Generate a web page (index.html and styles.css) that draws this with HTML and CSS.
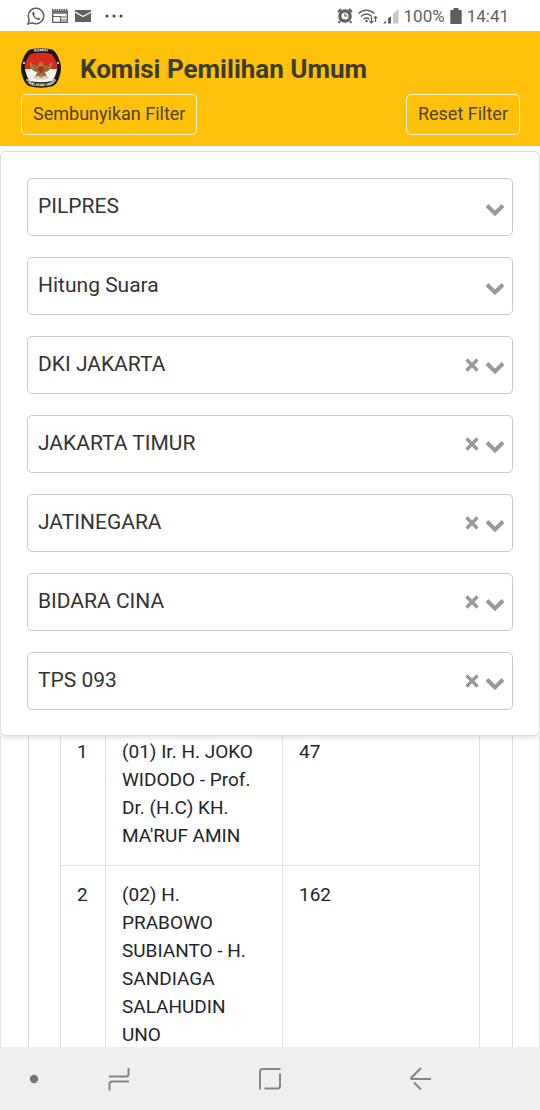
FILE: index.html
```html
<!DOCTYPE html>
<html lang="id">
<head>
<meta charset="utf-8">
<meta name="viewport" content="width=device-width, initial-scale=1">
<title>Komisi Pemilihan Umum</title>
<link rel="stylesheet" href="styles.css">
</head>
<body>
<svg width="0" height="0" class="sprite" aria-hidden="true">
  <symbol id="chevron" viewBox="0 0 20 14"><path d="M2 2.500l8 8 8-8" fill="none" stroke="currentColor" stroke-width="4"/></symbol>
  <symbol id="cross" viewBox="0 0 14 14"><path d="M1.500 1.500l11 11M12.500 1.500l-11 11" fill="none" stroke="currentColor" stroke-width="3.400"/></symbol>
</svg>

<div class="status">
  <div class="status-left">
    <svg width="18" height="18" viewBox="0 0 18 18" fill="none" stroke="#5f5f5f"><path d="M1 17l1.200-4.500A7.700 7.700 0 1 1 5.500 15.800z" stroke-width="1.500"/><path d="M6.300 4.500c-2 1.200-.8 4.200 1.200 6.200s4.800 3.300 6.100 1.300l-2.200-1.500-1.100 1c-1.600-.7-2.700-1.900-3.200-3.200l.9-1z" fill="#5f5f5f" stroke="none"/></svg>
    <svg width="16" height="14" viewBox="0 0 16 14" fill="none" stroke="#5f5f5f"><path d="M.7 2.500h14.600v10.800H.7z" stroke-width="1.300"/><path d="M0 1h16" stroke-width="2" stroke-dasharray="1.500 .8"/><path d="M0 4h16" stroke-width="1.500"/><path d="M1 7.500h8M8.500 7v6" stroke-width="1.200"/><path d="M9 7h6v2H9zM9 10h6v3H9z" fill="#aaa" stroke="none"/></svg>
    <svg width="16" height="12" viewBox="0 0 16 12"><path d="M0 0h16v12H0z" fill="#5f5f5f"/><path d="M0 2l8 4.500L16 2" fill="none" stroke="#fff" stroke-width="1.300"/></svg>
    <svg class="dots" width="18" height="4" viewBox="0 0 18 4" fill="#444"><circle cx="2" cy="2" r="1.500"/><circle cx="9" cy="2" r="1.500"/><circle cx="16" cy="2" r="1.500"/></svg>
  </div>
  <div class="status-right">
    <svg width="16" height="16" viewBox="0 0 16 16"><circle cx="8" cy="8" r="6.800" fill="#5f5f5f"/><path d="M1 4l3-3M12 1l3 3M3 13l-1.500 2M13 13l1.500 2" stroke="#5f5f5f" stroke-width="2"/><circle cx="8" cy="8" r="3.600" fill="#fff"/><path d="M8 5.500V8h2.500" fill="none" stroke="#5f5f5f" stroke-width="1.200"/></svg>
    <svg width="20" height="16" viewBox="0 0 20 16" fill="none" stroke="#5f5f5f" stroke-width="1.500"><path d="M.5 5.500C5 1 12 1 16.500 5.500M3 8.500c3.500-3.200 7.500-3.200 11 0M5.500 11.300c2-1.700 4-1.700 6 0"/><circle cx="8.500" cy="13" r="1.300" fill="#5f5f5f" stroke="none"/><path d="M13.500 9v6M11.500 13l2 2 2-2M17.500 14V8.500M16 10l1.500-1.500L19 10" stroke-width="1.200"/></svg>
    <svg width="16" height="16" viewBox="0 0 16 16"><path d="M0 15.500h3v-3zM5 15.500h3V8L5 10.500z" fill="#5f5f5f"/><path d="M10 15.500h5.500V1L10 6z" fill="#c6c6c6"/></svg>
    <span class="battery-level">100%</span>
    <svg width="12" height="16" viewBox="0 0 12 16"><path d="M3.500 0h5v2H11q.7 0 .7.700V15.300q0 .7-.7.700H1q-.7 0-.7-.7V2.700Q.3 2 1 2h2.500z" fill="#5f5f5f"/></svg>
    <span>14:41</span>
  </div>
</div>

<header class="header">
  <div class="brand">
    <svg class="logo" viewBox="0 0 40 40" role="img" aria-label="KPU">
      <defs>
        <path id="arc-top" d="M8 4.700Q20 1.700 32 4.700"/>
        <path id="arc-bottom" d="M2 25Q5 36 12 37.500Q20 39 28 37.500Q35 36 38 25"/>
      </defs>
      <path d="M9 1.500Q20-1.500 31 1.500Q35 3.500 38 11Q42 20 38 30Q36 36 32 38Q20 41.500 8 38Q4 36 2 30Q-2 20 2 11Q5 3.500 9 1.500z" fill="#171714"/>
      <path d="M9 6Q20 3.500 31 6L35 13Q37 18 36 22H4Q3 18 5 13z" fill="#d9281c"/>
      <path d="M4 21h32Q35 28 31 33Q20 35.500 9 33Q5 28 4 21z" fill="#f7f3ee"/>
      <path d="M9 13c1.500 3.500 5 4.500 8 5.500l1-4q2-2 4 0l1 4c3-1 6.500-2 8-5.500q1 5.500-2 8.500-2.500 2.500-5 2.500l2 5-3-1-3 2.500-3-2.500-3 1 2-5q-2.500 0-5-2.500-3-3-2-8.500z" fill="#a57d3c"/>
      <path d="M11 17q3 3 6 4M29 17q-3 3-6 4M12 21l5 2M28 21l-5 2M15 28l5-4 5 4" fill="none" stroke="#5b4928" stroke-width=".8"/>
      <path d="M17.500 18.500h5v4L20 25l-2.500-2.500z" fill="#b32718"/>
      <path d="M13 28q7 3 14 0l1 2q-8 3-16 0z" fill="#d8cfbd"/>
      <circle cx="3" cy="15" r="1" fill="#fff"/><circle cx="37" cy="15" r="1" fill="#fff"/>
      <g class="logo-text"><text><textPath href="#arc-top" startOffset="50%">KOMISI</textPath></text><text><textPath href="#arc-bottom" startOffset="50%">PEMILIHAN UMUM</textPath></text></g>
    </svg>
    <h1 class="title">Komisi Pemilihan Umum</h1>
  </div>
  <div class="actions">
    <button class="btn" type="button">Sembunyikan Filter</button>
    <button class="btn" type="button">Reset Filter</button>
  </div>
</header>

<form class="filters">
  <div class="field"><select class="select" aria-label="Jenis pemilihan"><option>PILPRES</option></select><svg class="chevron"><use href="#chevron"/></svg></div>
  <div class="field"><select class="select" aria-label="Tampilan"><option>Hitung Suara</option></select><svg class="chevron"><use href="#chevron"/></svg></div>
  <div class="field"><select class="select" aria-label="Provinsi"><option>DKI JAKARTA</option></select><button class="clear" type="button" aria-label="Hapus provinsi"><svg class="cross"><use href="#cross"/></svg></button><svg class="chevron"><use href="#chevron"/></svg></div>
  <div class="field"><select class="select" aria-label="Kota"><option>JAKARTA TIMUR</option></select><button class="clear" type="button" aria-label="Hapus kota"><svg class="cross"><use href="#cross"/></svg></button><svg class="chevron"><use href="#chevron"/></svg></div>
  <div class="field"><select class="select" aria-label="Kecamatan"><option>JATINEGARA</option></select><button class="clear" type="button" aria-label="Hapus kecamatan"><svg class="cross"><use href="#cross"/></svg></button><svg class="chevron"><use href="#chevron"/></svg></div>
  <div class="field"><select class="select" aria-label="Kelurahan"><option>BIDARA CINA</option></select><button class="clear" type="button" aria-label="Hapus kelurahan"><svg class="cross"><use href="#cross"/></svg></button><svg class="chevron"><use href="#chevron"/></svg></div>
  <div class="field"><select class="select" aria-label="TPS"><option>TPS 093</option></select><button class="clear" type="button" aria-label="Hapus TPS"><svg class="cross"><use href="#cross"/></svg></button><svg class="chevron"><use href="#chevron"/></svg></div>
</form>

<main class="results">
  <div class="card">
    <table class="votes">
      <colgroup><col class="col-no"><col class="col-name"><col></colgroup>
      <tbody>
        <tr><td class="no">1</td><td>(01) Ir. H. JOKO WIDODO - Prof. Dr. (H.C) KH. MA'RUF AMIN</td><td>47</td></tr>
        <tr><td class="no">2</td><td>(02) H. PRABOWO SUBIANTO - H. SANDIAGA SALAHUDIN UNO</td><td>162</td></tr>
      </tbody>
    </table>
  </div>
</main>

<nav class="navbar">
  <svg width="10" height="10" viewBox="0 0 10 10"><circle cx="5" cy="5" r="4.200" fill="#777"/></svg>
  <button class="nav-btn" type="button" aria-label="Aplikasi terbaru"><svg width="22" height="24" viewBox="0 0 22 24"><path d="M1 9.500h17q2.500 0 2.500-2.500V1M21 14.500H4q-2.500 0-2.500 2.500v6.500"/></svg></button>
  <button class="nav-btn" type="button" aria-label="Beranda"><svg width="22" height="22" viewBox="0 0 22 22"><path d="M1 21.500V3.500Q1 1 3.500 1H21.500M21 5.500V18q0 2.500-2.500 2.500H5.500"/></svg></button>
  <button class="nav-btn" type="button" aria-label="Kembali"><svg width="22" height="24" viewBox="0 0 22 24"><path d="M11 1L1.500 10.500Q.5 12 2 12H21M4 15.500l7 7"/></svg></button>
</nav>
</body>
</html>
```
FILE: styles.css
```css
* { box-sizing: border-box; }

body {
  margin: 0;
  height: 100vh;
  display: flex;
  flex-direction: column;
  background: #fff;
  color: #212529;
  font-family: Roboto, "Liberation Sans", sans-serif;
}

button, select { font: inherit; color: inherit; }
svg { display: block; flex: none; }
.sprite { position: absolute; }

.status {
  flex: none;
  height: 31px;
  padding: 1px 31px 0 27px;
  display: flex;
  align-items: center;
  justify-content: space-between;
  color: #5f5f5f;
  font-size: 17px;
}
.status-left { display: flex; align-items: center; gap: 7px; }
.status-right { display: flex; align-items: center; gap: 5px; }
.dots { margin-left: 7px; }

.header {
  flex: none;
  padding: 17px 20px 11px 21px;
  background: #ffc10a;
}
.brand { display: flex; align-items: center; gap: 19px; }
.logo { width: 40px; height: 40px; }
.logo-text {
  fill: #fff;
  font-size: 4px;
  font-weight: 700;
  text-anchor: middle;
}
.title {
  margin: 0;
  color: #3b3c30;
  font-size: 26px;
  font-weight: 700;
  line-height: 42px;
  height: 40px;
}
.actions {
  display: flex;
  justify-content: space-between;
  margin-top: 6px;
}
.btn {
  height: 41px;
  padding: 0 11px 3px;
  border: 1px solid #fff3c8;
  border-radius: 5px;
  background: transparent;
  color: #4b4321;
  font-size: 18px;
}

.filters {
  flex: none;
  position: relative;
  z-index: 1;
  margin-top: 5px;
  padding: 26px 26px 25px;
  display: grid;
  gap: 21px;
  border: 1px solid #dcdcdc;
  border-radius: 6px;
  background: #fff;
  box-shadow: 0 2px 5px rgba(0, 0, 0, .12);
}
.field {
  height: 58px;
  padding-right: 7px;
  display: flex;
  align-items: center;
  border: 1px solid #c9c9c9;
  border-radius: 5px;
  color: #999;
}
.select {
  flex: 1;
  min-width: 0;
  height: 100%;
  padding: 0 10px 2px;
  border: 0;
  appearance: none;
  background: transparent;
  color: #333;
  font-size: 21px;
}
.clear {
  padding: 0;
  margin-right: 6px;
  border: 0;
  background: none;
}
.cross { width: 14px; height: 14px; }
.chevron { width: 20px; height: 14px; margin-top: 5px; }

.results {
  flex: 1;
  min-height: 0;
  display: flex;
  overflow: hidden;
  padding: 0 26px 0 27px;
  border: solid #e2e2e2;
  border-width: 0 1px;
}
.card {
  flex: 1;
  padding: 0 32px 0 31px;
  border: solid #dcdcdc;
  border-width: 0 1px;
}
.votes {
  width: 100%;
  margin-top: -14px;
  border-collapse: collapse;
  table-layout: fixed;
  font-size: 19px;
  line-height: 28px;
}
.votes td {
  padding: 15px 16px;
  vertical-align: top;
  border: 1px solid #dee2e6;
}
.votes .no { padding: 15px 0 15px 16px; }
.col-no { width: 45px; }
.col-name { width: 177px; }

.navbar {
  flex: none;
  height: 63px;
  display: grid;
  grid-template-columns: 68fr 102fr 200fr 102fr 68fr;
  align-items: center;
  justify-items: center;
  background: #efefef;
}
.nav-btn {
  padding: 0;
  border: 0;
  background: none;
  fill: none;
  stroke: #858585;
  stroke-width: 2;
}
```
